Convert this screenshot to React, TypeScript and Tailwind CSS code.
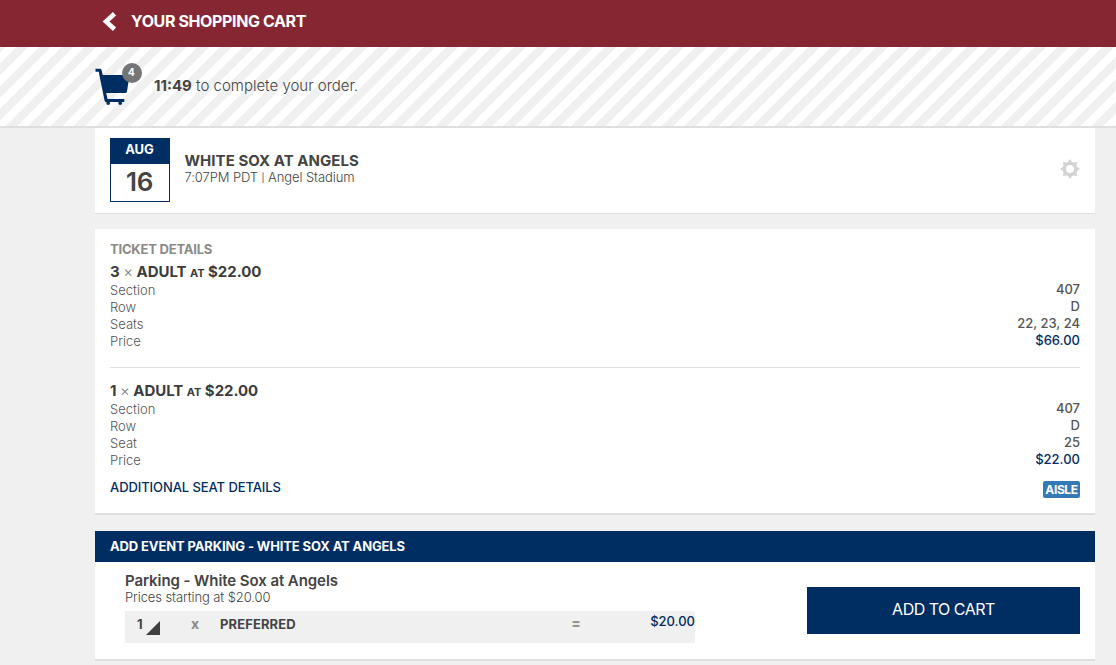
import React from 'react';

type Detail = {
  label: string;
  value: string;
  className: string;
};

type Ticket = {
  quantity: number;
  price: string;
  details: Detail[];
};

const tickets: Ticket[] = [
  {
    quantity: 3,
    price: '$22.00',
    details: [
      { label: 'Section', value: '407', className: 'text-[#555]' },
      { label: 'Row', value: 'D', className: 'text-[#555]' },
      { label: 'Seats', value: '22, 23, 24', className: 'text-[#555]' },
      { label: 'Price', value: '$66.00', className: 'text-[#002d62]' },
    ],
  },
  {
    quantity: 1,
    price: '$22.00',
    details: [
      { label: 'Section', value: '407', className: 'text-[#555]' },
      { label: 'Row', value: 'D', className: 'text-[#555]' },
      { label: 'Seat', value: '25', className: 'text-[#555]' },
      { label: 'Price', value: '$22.00', className: 'text-[#002d62]' },
    ],
  },
];

const CartIcon: React.FC = () => (
  <svg width="36" height="37" viewBox="0 0 36 37" className="block" fill="#002d62">
    <path d="M0.5 0.8H5.2Q6.2 0.8 6.5 1.9L7.8 7H34.5L32 23.5Q31.7 25 30 25H11.2L12.5 31H29.3V34H11Q9.9 34 9.6 32.7L3.7 3.8H0.5Z" />
    <circle cx="13.2" cy="35" r="1.9" />
    <circle cx="25.2" cy="35" r="1.9" />
  </svg>
);

const GearIcon: React.FC = () => (
  <svg width="20" height="20" viewBox="0 0 20 20" className="block" fill="#d3d3d3" fillRule="evenodd">
    <path d="M8 2.9 10 0 12 2.9 13.4 3.5 17 3 16.5 6.6 17.1 8 20 10 17.1 12 16.5 13.4 17 17 13.4 16.5 12 17.1 10 20 8 17.1 6.6 16.5 3 17 3.5 13.4 2.9 12 0 10 2.9 8 3.5 6.6 3 3 6.6 3.5ZM10 6a4 4 0 1 0 0 8a4 4 0 1 0 0-8Z" />
  </svg>
);

const TicketRow: React.FC<{ ticket: Ticket }> = ({ ticket }) => (
  <div>
    <h3 className="h-[20px] text-[15px] leading-[22px] font-bold tracking-[-0.03px] text-[#3c3c3c]">
      {ticket.quantity} <span className="font-light text-[#777]">×</span> ADULT{' '}
      <span className="text-[11px]">AT</span> {ticket.price}
    </h3>
    {ticket.details.map((detail) => (
      <div key={detail.label} className="flex justify-between text-[13px] leading-[17px]">
        <span className="pt-px -mb-px font-light text-[#555]">{detail.label}</span>
        <span className={`font-medium ${detail.className}`}>{detail.value}</span>
      </div>
    ))}
  </div>
);

const App: React.FC = () => {
  return (
    <div className="h-[665px] overflow-hidden bg-[#f0f0f0] font-['Inter','Liberation_Sans',sans-serif] text-[#444]">
      <header className="flex h-[47px] items-center bg-[#862633] pb-[4px] pl-[102px] text-white">
        <svg width="15" height="19" viewBox="0 0 15 19" fill="none" stroke="#fff" strokeWidth="4.6">
          <path d="M12.5 1.7 4 9.5 12.5 17.3" />
        </svg>
        <h1 className="ml-[14px] pb-[2px] text-[16px] leading-[20px] font-bold tracking-[-0.38px]">YOUR SHOPPING CART</h1>
      </header>

      <div className="flex h-[81px] border-b-2 border-[#dfdfdf] bg-[repeating-linear-gradient(135deg,#f0f0f0_0px,#f0f0f0_3.7px,#fff_4.3px,#fff_11.4px,#f0f0f0_12px,#f0f0f0_16px)] pl-[95px]">
        <div className="relative mt-[21px] h-[37px] w-[59px]">
          <CartIcon />
          <span className="absolute -top-[5px] left-[27px] flex size-[20px] items-center justify-center rounded-full bg-[#757575] pr-px pb-[2px] text-[10px] font-bold text-white">
            4
          </span>
        </div>
        <p className="mt-[29px] text-[15px] leading-[20px] font-light">
          <b className="font-bold">11:49</b> to complete your order.
        </p>
      </div>

      <main className="ml-[95px] w-[1000px]">
        <section className="flex h-[86px] border-b border-[#dfdfdf] bg-white px-[15px] pt-[10px]">
          <div className="h-[64px] w-[60px] border border-[#002d62] text-center">
            <div className="h-[25px] bg-[#002d62] pr-px text-[13px] leading-[21px] font-bold text-white">AUG</div>
            <div className="pr-px text-[26px] leading-[35px] font-semibold tracking-[-0.3px]">16</div>
          </div>
          <div className="ml-[14.5px] flex-1 pt-[13px]">
            <h2 className="text-[15px] leading-[19px] font-bold tracking-[0.04px]">WHITE SOX AT ANGELS</h2>
            <p className="text-[13px] leading-[15px] font-light tracking-[-0.09px]">
              7:07PM PDT <span className="align-[1px] text-[9px] font-normal">|</span> Angel Stadium
            </p>
          </div>
          <div className="pt-[21px]">
            <GearIcon />
          </div>
        </section>

        <section className="mt-[15px] h-[286px] border-b-2 border-[#dfdfdf] bg-white px-[15px] pt-[12px]">
          <h2 className="text-[13px] leading-[17px] font-bold tracking-[-0.2px] text-[#8a8a8a]">TICKET DETAILS</h2>
          <div className="mt-[3px]">
            <TicketRow ticket={tickets[0]} />
          </div>
          <div className="mt-[18px] border-t border-[#dfdfdf] pt-[12px]">
            <TicketRow ticket={tickets[1]} />
          </div>
          <div className="mt-[10px] flex justify-between text-[13px]">
            <a className="leading-[19px] font-medium tracking-[-0.08px] text-[#002d62]">ADDITIONAL SEAT DETAILS</a>
            <span className="mt-[3px] h-[17px] w-[37px] rounded-[2px] bg-[#337ab7] text-center text-[12px] leading-[17px] font-bold tracking-[-0.4px] text-white">
              AISLE
            </span>
          </div>
        </section>

        <section className="mt-[16px] h-[130px] border-b-2 border-[#dfdfdf] bg-white">
          <h2 className="h-[31px] bg-[#002d62] pl-[15px] text-[13px] leading-[31px] font-bold tracking-[-0.12px] text-white">
            ADD EVENT PARKING - WHITE SOX AT ANGELS
          </h2>
          <div className="flex justify-between pr-[15px] pl-[30px]">
            <div className="w-[570px] pt-[10px]">
              <h3 className="text-[15px] leading-[18px] font-semibold tracking-[-0.08px]">Parking - White Sox at Angels</h3>
              <p className="text-[13px] leading-[15px] font-light tracking-[-0.1px]">Prices starting at $20.00</p>
              <div className="mt-[6px] flex h-[32px] bg-[#f0f0f0] pl-[12px] text-[13px] leading-[27px] font-bold">
                <span className="w-[9px]">1</span>
                <svg width="14" height="14" viewBox="0 0 14 14" className="mt-[10px]" fill="#3f3f3f">
                  <path d="M14 0V14H0Z" />
                </svg>
                <span className="ml-[31px] w-[29px] text-[14px] leading-[26px] text-[#8a8a8a]">x</span>
                <span className="flex-1 tracking-[0.1px]">PREFERRED</span>
                <span className="w-[79px] text-[14px] leading-[24px] text-[#8a8a8a]">=</span>
                <span className="leading-[21px] font-medium text-[#002d62]">$20.00</span>
              </div>
            </div>
            <button className="mt-[25px] h-[47px] w-[273px] bg-[#002d62] pb-[3px] text-[16px] tracking-[-0.5px] text-white">
              ADD TO CART
            </button>
          </div>
        </section>
      </main>
    </div>
  );
};

export default App;
